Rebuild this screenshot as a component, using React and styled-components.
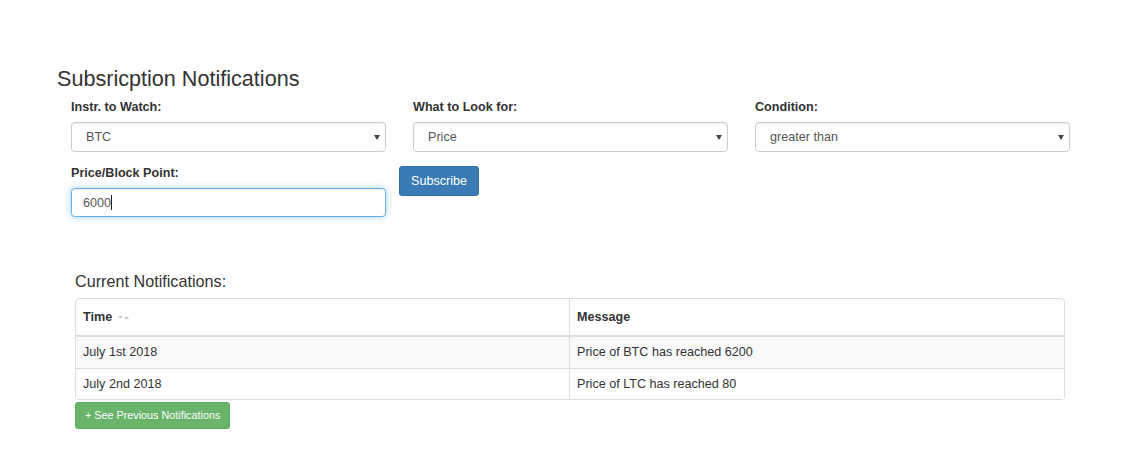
import React from "react";
import styled, { createGlobalStyle } from "styled-components";

const GlobalStyle = createGlobalStyle`
  body {
    margin: 0;
    background: #fff;
    font-family: "Liberation Sans", Arial, Helvetica, sans-serif;
    font-size: 12.6px;
    line-height: 18px;
    color: #333;
  }
  * { box-sizing: border-box; }
`;

const fields = [
  { label: "Instr. to Watch:", value: "BTC" },
  { label: "What to Look for:", value: "Price" },
  { label: "Condition:", value: "greater than" },
];

const notifications = [
  { time: "July 1st 2018", message: "Price of BTC has reached 6200" },
  { time: "July 2nd 2018", message: "Price of LTC has reached 80" },
];

const App = () => {
  return (
    <Page>
      <GlobalStyle />
      <Title>Subsricption Notifications</Title>
      <Form>
        <TopRow>
          {fields.map((f) => (
            <Field key={f.label}>
              <Label>{f.label}</Label>
              <Select>
                {f.value}
                <Arrow />
              </Select>
            </Field>
          ))}
        </TopRow>
        <BottomRow>
          <Field>
            <Label>Price/Block Point:</Label>
            <Input focused>
              6000
              <Caret />
            </Input>
          </Field>
          <Button variant="primary">Subscribe</Button>
        </BottomRow>
      </Form>

      <Section>
        <SectionTitle>Current Notifications:</SectionTitle>
        <Table>
          <thead>
            <tr>
              <Th>
                Time
                <SortCaret>
                  <svg width="14" height="5" viewBox="0 0 14 5">
                    <path d="M1 1 L6 1 L3.5 4 Z" fill="#c8c8c8" />
                    <path d="M7 4 L12 4 L9.5 1 Z" fill="#c8c8c8" />
                  </svg>
                </SortCaret>
              </Th>
              <Th>Message</Th>
            </tr>
          </thead>
          <tbody>
            {notifications.map((n, i) => (
              <Tr key={n.time} striped={i % 2 === 0}>
                <Td>{n.time}</Td>
                <Td>{n.message}</Td>
              </Tr>
            ))}
          </tbody>
        </Table>
        <Button variant="success" small>
          + See Previous Notifications
        </Button>
      </Section>
    </Page>
  );
};

export default App;

const Page = styled.div`
  padding: 67px 0 40px 57px;
`;

const Title = styled.h3`
  margin: 0;
  font-size: 21.6px;
  font-weight: 400;
  line-height: 24px;
  color: #333;
`;

const Form = styled.div`
  margin: 7px 0 0 14px;
`;

const TopRow = styled.div`
  display: grid;
  grid-template-columns: repeat(3, 315px);
  column-gap: 27px;
`;

const BottomRow = styled.div`
  display: flex;
  align-items: flex-start;
  gap: 13px;
  margin-top: 12px;
  & > div {
    width: 315px;
  }
`;

const Field = styled.div`
  display: flex;
  flex-direction: column;
`;

const Label = styled.label`
  font-weight: 700;
  line-height: 18px;
  margin-bottom: 6px;
`;

const Select = styled.div`
  position: relative;
  height: 30px;
  padding: 0 14px;
  display: flex;
  align-items: center;
  border: 1px solid #ccc;
  border-radius: 3.6px;
  background: #fff;
  color: #555;
  box-shadow: inset 0 1px 1px rgba(0, 0, 0, 0.075);
`;

const Arrow = styled.span`
  position: absolute;
  right: 5px;
  top: 12px;
  width: 0;
  height: 0;
  border-left: 3px solid transparent;
  border-right: 3px solid transparent;
  border-top: 5px solid #444;
`;

const Input = styled.div`
  height: 29px;
  padding: 0 11px;
  display: flex;
  align-items: center;
  border: 1px solid ${(p) => (p.focused ? "#66afe9" : "#ccc")};
  border-radius: 3.6px;
  color: #555;
  background: #fff;
  box-shadow: inset 0 1px 1px rgba(0, 0, 0, 0.075)
    ${(p) => (p.focused ? ", 0 0 7px rgba(102, 175, 233, 0.6)" : "")};
`;

const Caret = styled.span`
  display: inline-block;
  width: 1px;
  height: 15px;
  background: #222;
`;

const Button = styled.button`
  font-family: inherit;
  font-size: ${(p) => (p.small ? "10.8px" : "12.6px")};
  line-height: ${(p) => (p.small ? "15px" : "18px")};
  height: ${(p) => (p.small ? "27px" : "30px")};
  padding: ${(p) => (p.small ? "0 9px" : "0 11px")};
  margin-top: 2px;
  color: #fff;
  border-radius: 3px;
  cursor: pointer;
  background: ${(p) => (p.variant === "success" ? "#69b36a" : "#3a7ab5")};
  border: 1px solid ${(p) => (p.variant === "success" ? "#5dab5e" : "#326fa6")};
`;

const Section = styled.div`
  margin: 55px 0 0 18px;
  width: 990px;
  display: flex;
  flex-direction: column;
  align-items: flex-start;
`;

const SectionTitle = styled.h4`
  margin: 0 0 8px;
  font-size: 16.2px;
  font-weight: 400;
  line-height: 18px;
  color: #333;
`;

const Table = styled.table`
  width: 990px;
  border-collapse: separate;
  border-spacing: 0;
  border: 1px solid #ddd;
  border-radius: 4px;
  table-layout: fixed;
`;

const Th = styled.th`
  text-align: left;
  font-weight: 700;
  padding: 8px 7px 9px;
  line-height: 18px;
  border-bottom: 2px solid #ddd;
  &:first-child {
    border-right: 1px solid #ddd;
  }
`;

const SortCaret = styled.span`
  display: inline-block;
  margin-left: 5px;
  vertical-align: 1px;
`;

const Tr = styled.tr`
  background: ${(p) => (p.striped ? "#f9f9f9" : "#fff")};
  &:not(:last-child) td {
    border-bottom: 1px solid #ddd;
  }
`;

const Td = styled.td`
  padding: 6.3px 7px;
  line-height: 18px;
  &:first-child {
    border-right: 1px solid #ddd;
  }
`;
